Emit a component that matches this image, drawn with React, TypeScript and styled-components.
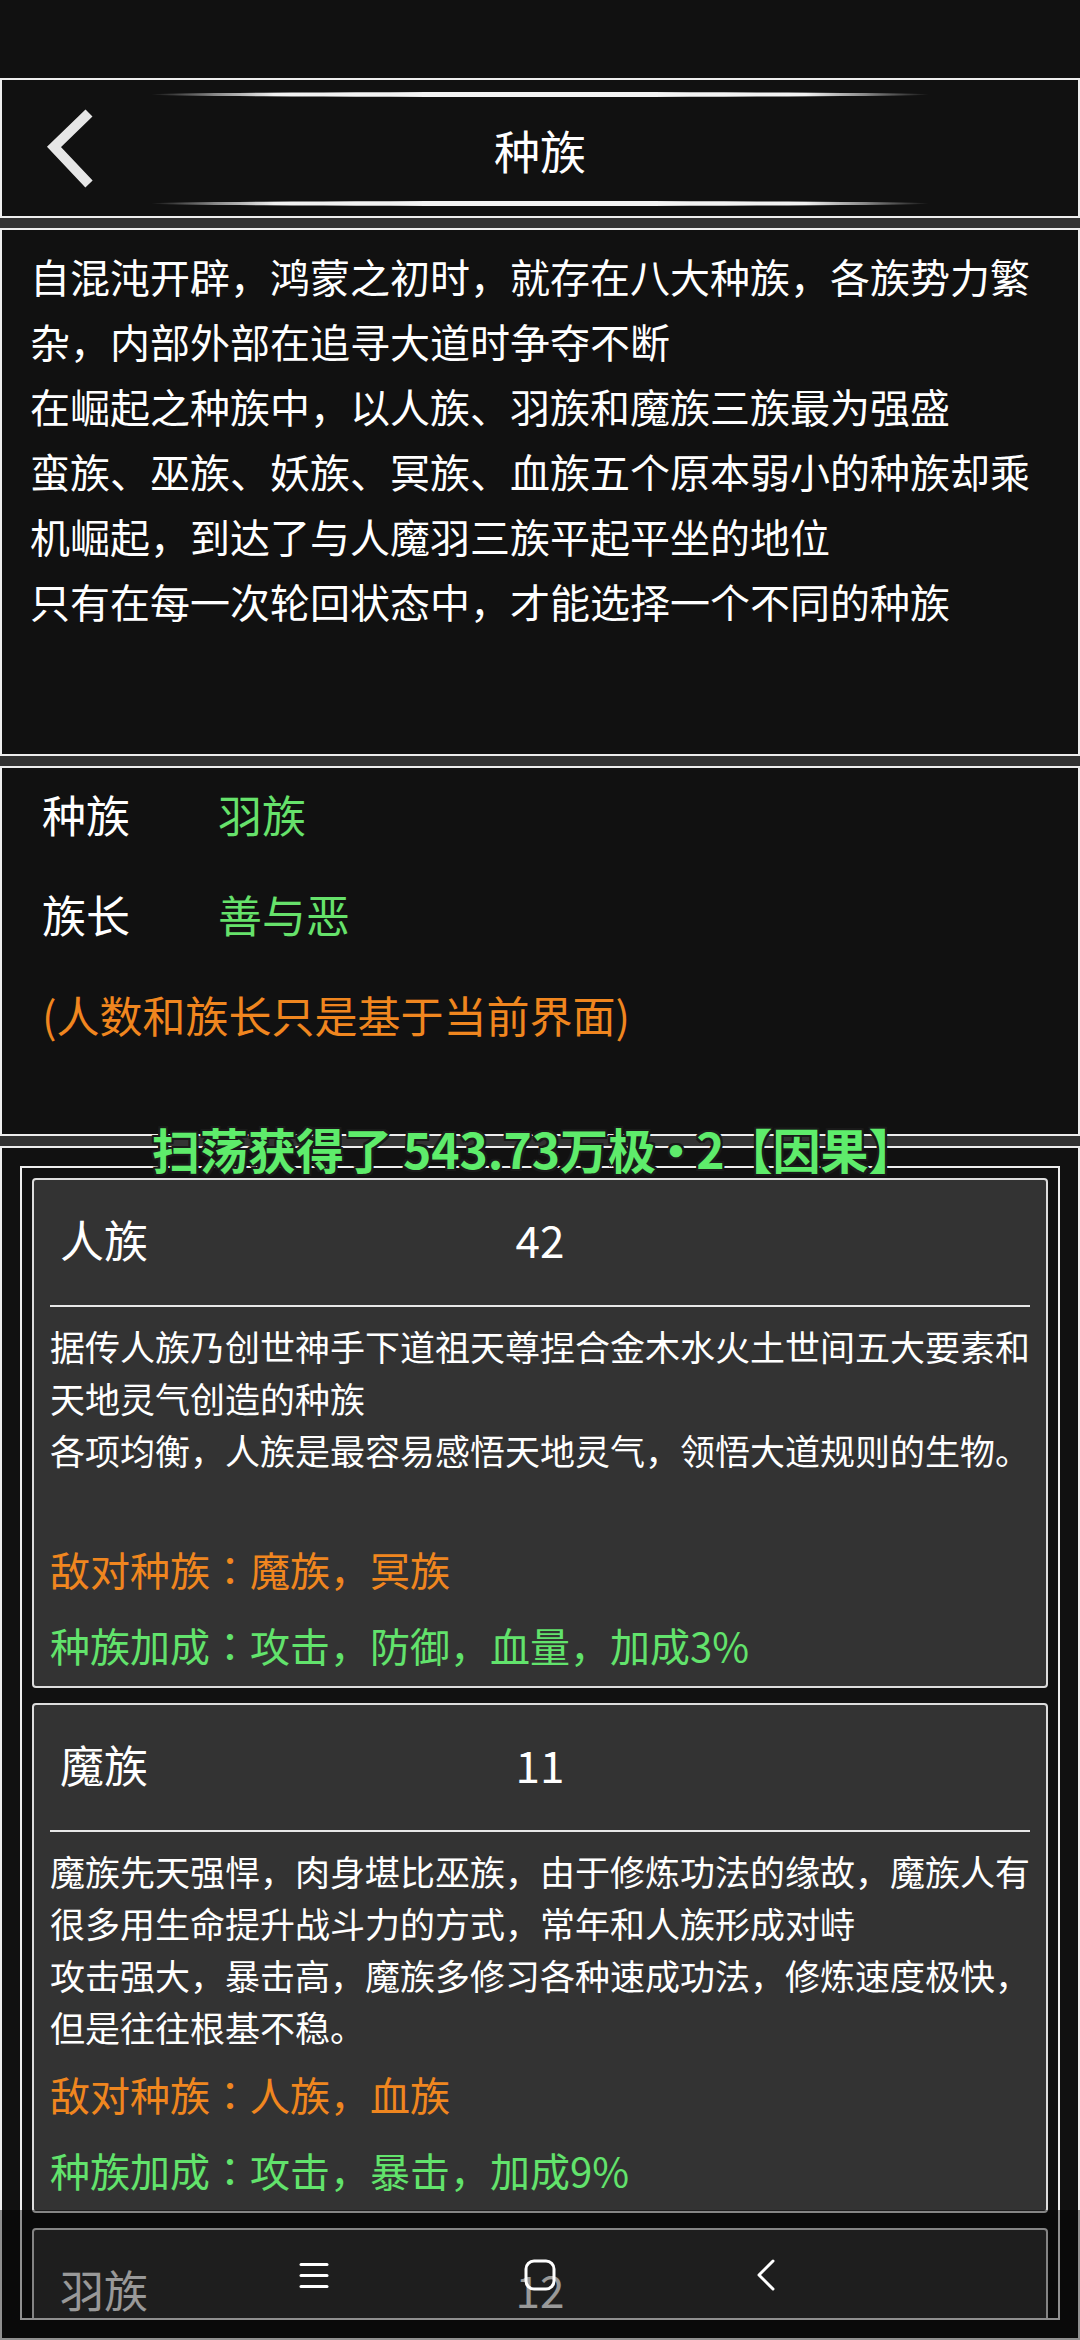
import React from "react";
import styled, { createGlobalStyle } from "styled-components";

const GlobalStyle = createGlobalStyle`
  html, body {
    margin: 0;
    padding: 0;
    background: #333333;
  }
  body {
    font-family: "Noto Sans CJK SC", "Noto Sans", sans-serif;
    color: #ffffff;
  }
  * { box-sizing: border-box; }
`;

const Page = styled.div`
  position: relative;
  width: 1080px;
  height: 2340px;
  overflow: hidden;
  display: flex;
  flex-direction: column;
  background: #333333;
`;

const StatusBar = styled.div`
  height: 78px;
  flex-shrink: 0;
  background: #111111;
`;

const Header = styled.header`
  height: 140px;
  flex-shrink: 0;
  background: #111111;
  border: 2px solid #eeeeee;
  display: flex;
  flex-direction: column;
  align-items: center;
`;

const GlowLine = styled.div<{ $top?: boolean }>`
  width: 780px;
  height: 5px;
  flex-shrink: 0;
  margin-top: ${(p) => (p.$top ? "12px" : "0")};
  margin-bottom: ${(p) => (p.$top ? "0" : "10px")};
  border-radius: 50%;
  background: linear-gradient(
    90deg,
    rgba(255, 255, 255, 0) 0%,
    rgba(255, 255, 255, 0.25) 4%,
    rgba(255, 255, 255, 0.95) 16%,
    #f4f4f4 50%,
    rgba(255, 255, 255, 0.95) 84%,
    rgba(255, 255, 255, 0.25) 96%,
    rgba(255, 255, 255, 0) 100%
  );
  filter: blur(0.6px);
`;

const TitleRow = styled.div`
  flex: 1;
  width: 100%;
  display: grid;
  grid-template-columns: 1fr auto 1fr;
  align-items: center;
`;

const BackButton = styled.button`
  justify-self: start;
  margin-left: 38px;
  padding: 0;
  border: none;
  background: transparent;
  display: flex;
  align-items: center;
  cursor: pointer;
`;

const Title = styled.h1`
  margin: 0;
  font-size: 46px;
  font-weight: 400;
  line-height: 60px;
  color: #ffffff;
`;

const Panel = styled.section<{ $height?: number; $grow?: boolean }>`
  margin-top: 10px;
  flex-shrink: 0;
  height: ${(p) => (p.$height ? `${p.$height}px` : "auto")};
  flex: ${(p) => (p.$grow ? "1" : "none")};
  min-height: 0;
  background: #111111;
  border: 2px solid #eeeeee;
`;

const IntroText = styled.p`
  margin: 0;
  padding: 14px 28px 0;
  font-size: 40px;
  line-height: 65px;
  color: #ffffff;
  white-space: pre-line;
`;

const InfoList = styled.div`
  display: flex;
  flex-direction: column;
  gap: 8px;
  padding: 0 40px;
`;

const InfoRow = styled.div`
  height: 92px;
  display: flex;
  align-items: center;
  font-size: 44px;
`;

const InfoLabel = styled.span`
  width: 176px;
  color: #ffffff;
`;

const InfoValue = styled.span`
  color: #66e26b;
`;

const InfoNote = styled.div`
  height: 92px;
  display: flex;
  align-items: center;
  font-size: 43px;
  color: #f0861f;
`;

const ListPanel = styled(Panel)`
  display: flex;
  flex-direction: column;
  padding: 18px;
`;

const ListFrame = styled.div`
  flex: 1;
  min-height: 0;
  overflow: hidden;
  border: 2px solid #eeeeee;
  padding: 10px;
  display: flex;
  flex-direction: column;
  gap: 15px;
`;

const Card = styled.article`
  flex-shrink: 0;
  background: #333333;
  border: 2px solid #dddddd;
  border-radius: 4px;
  padding: 0 6px 3px 16px;
`;

const NameRow = styled.div`
  height: 118px;
  margin-right: 10px;
  display: grid;
  grid-template-columns: 1fr auto 1fr;
  align-items: center;
  font-size: 44px;
  color: #ffffff;
`;

const RaceName = styled.span`
  padding-left: 10px;
`;

const RaceCount = styled.span`
  text-align: center;
`;

const Divider = styled.div`
  height: 2px;
  margin: 7px 10px 0 0;
  background: #e8e8e8;
`;

const Description = styled.p`
  margin: 13px 0 0;
  min-height: 208px;
  font-size: 35px;
  line-height: 52px;
  color: #ffffff;
  white-space: pre-line;
`;

const Stats = styled.div`
  margin-top: 3px;
`;

const StatLine = styled.div<{ $tone: "enemy" | "bonus" }>`
  font-family: "Noto Sans CJK JP", "Noto Sans CJK SC", sans-serif;
  font-size: 40px;
  line-height: 76px;
  color: ${(p) => (p.$tone === "enemy" ? "#f0861f" : "#62e36c")};
`;

const Toast = styled.div`
  position: absolute;
  top: 1118px;
  left: 152px;
  font-size: 48px;
  font-weight: 700;
  line-height: 60px;
  color: #5eec6b;
  white-space: nowrap;
  pointer-events: none;
  text-shadow:
    -2px 0 #1a1a1a, 2px 0 #1a1a1a, 0 -2px #1a1a1a, 0 2px #1a1a1a,
    -2px -2px #1a1a1a, 2px -2px #1a1a1a, -2px 2px #1a1a1a, 2px 2px #1a1a1a;
`;

const ToastDot = styled.span`
  margin: 0 -4px;
`;

const NavBar = styled.nav`
  position: absolute;
  left: 0;
  right: 0;
  bottom: 0;
  height: 130px;
  background: rgba(0, 0, 0, 0.4);
  display: flex;
  justify-content: center;
  align-items: center;
`;

const NavSlot = styled.div`
  width: 226px;
  display: flex;
  justify-content: center;
  align-items: center;
`;

type Race = {
  name: string;
  count: number;
  desc: string;
  enemy: string;
  bonus: string;
};

const races: Race[] = [
  {
    name: "人族",
    count: 42,
    desc: "据传人族乃创世神手下道祖天尊捏合金木水火土世间五大要素和天地灵气创造的种族\n各项均衡，人族是最容易感悟天地灵气，领悟大道规则的生物。",
    enemy: "敌对种族：魔族，冥族",
    bonus: "种族加成：攻击，防御，血量，加成3%",
  },
  {
    name: "魔族",
    count: 11,
    desc: "魔族先天强悍，肉身堪比巫族，由于修炼功法的缘故，魔族人有很多用生命提升战斗力的方式，常年和人族形成对峙\n攻击强大，暴击高，魔族多修习各种速成功法，修炼速度极快，但是往往根基不稳。",
    enemy: "敌对种族：人族，血族",
    bonus: "种族加成：攻击，暴击，加成9%",
  },
  {
    name: "羽族",
    count: 12,
    desc: "羽族天生双翼，身法灵动，擅长御风而行\n速度极快，闪避高。",
    enemy: "敌对种族：妖族，巫族",
    bonus: "种族加成：速度，闪避，加成5%",
  },
];

const BackChevron = () => (
  <svg width="60" height="84" viewBox="0 0 60 84">
    <polyline
      points="49,6 14,40 49,77"
      fill="none"
      stroke="#e6e6e6"
      strokeWidth="10"
      strokeLinecap="butt"
      strokeLinejoin="miter"
    />
  </svg>
);

const MenuIcon = () => (
  <svg width="30" height="27" viewBox="0 0 30 27">
    <g stroke="#ffffff" strokeWidth="3" strokeLinecap="round">
      <line x1="2" y1="2.5" x2="28" y2="2.5" />
      <line x1="2" y1="13.5" x2="28" y2="13.5" />
      <line x1="2" y1="24.5" x2="28" y2="24.5" />
    </g>
  </svg>
);

const HomeIcon = () => (
  <svg width="32" height="32" viewBox="0 0 32 32">
    <rect x="2" y="2" width="28" height="28" rx="8" fill="none" stroke="#ffffff" strokeWidth="3" />
  </svg>
);

const BackIcon = () => (
  <svg width="20" height="32" viewBox="0 0 20 32">
    <polyline
      points="17,2 3,16 17,30"
      fill="none"
      stroke="#ffffff"
      strokeWidth="3"
      strokeLinecap="round"
      strokeLinejoin="round"
    />
  </svg>
);

export default function App() {
  return (
    <>
      <GlobalStyle />
      <Page>
        <StatusBar />
        <Header>
          <GlowLine $top />
          <TitleRow>
            <BackButton aria-label="返回">
              <BackChevron />
            </BackButton>
            <Title>种族</Title>
            <span />
          </TitleRow>
          <GlowLine />
        </Header>

        <Panel $height={528}>
          <IntroText>
            {
              "自混沌开辟，鸿蒙之初时，就存在八大种族，各族势力繁杂，内部外部在追寻大道时争夺不断\n在崛起之种族中，以人族、羽族和魔族三族最为强盛\n蛮族、巫族、妖族、冥族、血族五个原本弱小的种族却乘机崛起，到达了与人魔羽三族平起平坐的地位\n只有在每一次轮回状态中，才能选择一个不同的种族"
            }
          </IntroText>
        </Panel>

        <Panel $height={370}>
          <InfoList>
            <InfoRow>
              <InfoLabel>种族</InfoLabel>
              <InfoValue>羽族</InfoValue>
            </InfoRow>
            <InfoRow>
              <InfoLabel>族长</InfoLabel>
              <InfoValue>善与恶</InfoValue>
            </InfoRow>
            <InfoNote>(人数和族长只是基于当前界面)</InfoNote>
          </InfoList>
        </Panel>

        <ListPanel $grow>
          <ListFrame>
            {races.map((r) => (
              <Card key={r.name}>
                <NameRow>
                  <RaceName>{r.name}</RaceName>
                  <RaceCount>{r.count}</RaceCount>
                  <span />
                </NameRow>
                <Divider />
                <Description>{r.desc}</Description>
                <Stats>
                  <StatLine $tone="enemy">{r.enemy}</StatLine>
                  <StatLine $tone="bonus">{r.bonus}</StatLine>
                </Stats>
              </Card>
            ))}
          </ListFrame>
        </ListPanel>

        <Toast>
          扫荡获得了 543.73万极<ToastDot>·</ToastDot>2【因果】
        </Toast>

        <NavBar>
          <NavSlot>
            <MenuIcon />
          </NavSlot>
          <NavSlot>
            <HomeIcon />
          </NavSlot>
          <NavSlot>
            <BackIcon />
          </NavSlot>
        </NavBar>
      </Page>
    </>
  );
}
